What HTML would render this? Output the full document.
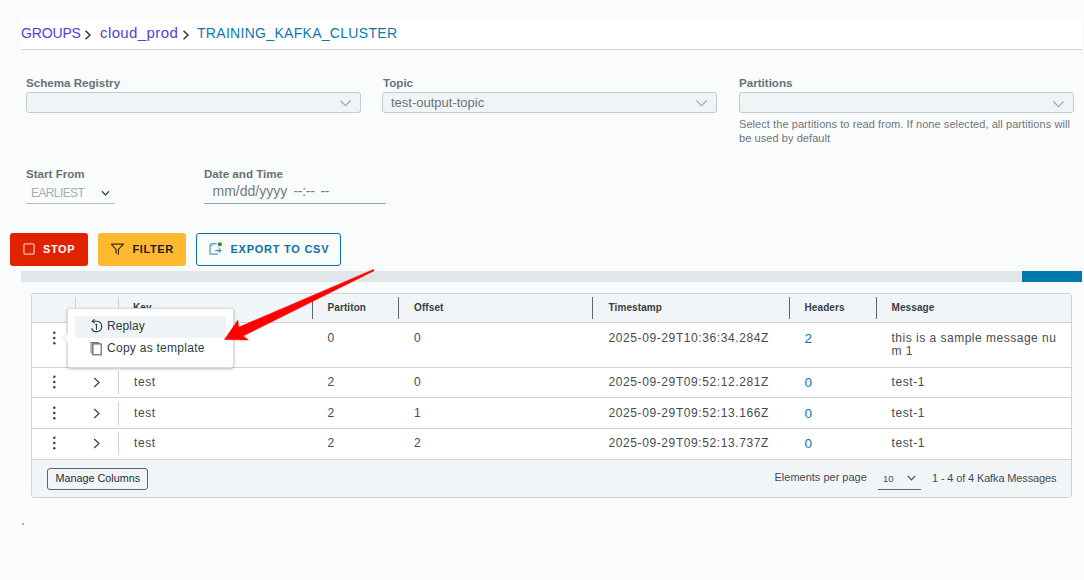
<!DOCTYPE html>
<html><head><meta charset="utf-8">
<style>
*{box-sizing:border-box;margin:0;padding:0}
html,body{width:1084px;height:580px;overflow:hidden;background:#fafbfb;font-family:"Liberation Sans",sans-serif;position:relative}
.a{position:absolute;white-space:nowrap;line-height:1}
.hdr{position:absolute;left:21px;top:18px;width:1061px;height:32px;background:#fff;border-bottom:1px solid #d0d7dc}
.bc{font-size:14px;top:26px}
.lbl{font-size:11.6px;font-weight:bold;color:#67727a;top:76.7px}
.sel{position:absolute;top:92px;height:21px;width:335px;background:#f1f4f7;border:1px solid #c3ccd2;border-radius:3px}
.chev{position:absolute;width:10px;height:6px}
.btn{position:absolute;top:233px;height:33px;border-radius:3px}
.btxt{font-size:11px;font-weight:bold;letter-spacing:0.6px;top:243.7px}
.tbl{position:absolute;left:31px;top:293px;width:1041px;height:205px;border:1px solid #ccd4d9;border-radius:3px;background:#fff;overflow:hidden}
.th{font-size:10px;font-weight:bold;color:#363f45;top:302.5px;letter-spacing:0.1px}
.td{font-size:12px;color:#454c50;letter-spacing:0.6px}
.vs{position:absolute;width:1px;background:#5d6870}
.rl{position:absolute;left:32px;width:1039px;height:1px;background:#ccd4d9}
</style></head><body>
<div class="hdr"></div>
<div class="a bc" style="left:21px;color:#5042d8;letter-spacing:-0.15px">GROUPS</div>
<div class="a bc" style="left:100px;top:25.3px;font-size:15px;color:#5042d8;letter-spacing:0.4px">cloud_prod</div>
<div class="a bc" style="left:197px;color:#0b79b0;letter-spacing:0.3px">TRAINING_KAFKA_CLUSTER</div>

<div class="a lbl" style="left:26px">Schema Registry</div>
<div class="a lbl" style="left:383px">Topic</div>
<div class="a lbl" style="left:739px">Partitions</div>
<div class="sel" style="left:26px"></div>
<div class="sel" style="left:382px"></div>
<div class="sel" style="left:739px"></div>

<svg class="a" style="left:83.5px;top:30px" width="8" height="10" viewBox="0 0 8 10"><path d="M1.5 0.8 L6 5 L1.5 9.2" fill="none" stroke="#2f3336" stroke-width="1.45"/></svg>
<svg class="a" style="left:181.5px;top:30px" width="8" height="10" viewBox="0 0 8 10"><path d="M1.5 0.8 L6 5 L1.5 9.2" fill="none" stroke="#2f3336" stroke-width="1.45"/></svg>
<div class="a" style="left:391px;top:95.5px;font-size:13px;color:#6b7378">test-output-topic</div>
<svg class="a" style="left:340px;top:100px" width="11" height="7" viewBox="0 0 11 7"><path d="M0.5 0.5 L5.5 5.8 L10.5 0.5" fill="none" stroke="#98a2aa" stroke-width="1.1"/></svg>
<svg class="a" style="left:696px;top:100px" width="11" height="7" viewBox="0 0 11 7"><path d="M0.5 0.5 L5.5 5.8 L10.5 0.5" fill="none" stroke="#98a2aa" stroke-width="1.1"/></svg>
<svg class="a" style="left:1053px;top:101px" width="11" height="7" viewBox="0 0 11 7"><path d="M0.5 0.5 L5.5 5.8 L10.5 0.5" fill="none" stroke="#98a2aa" stroke-width="1.1"/></svg>
<div class="a" style="left:739px;top:117px;font-size:11px;line-height:14px;color:#6e767b;white-space:normal;width:350px;letter-spacing:0.07px">Select the partitions to read from. If none selected, all partitions will<br>be used by default</div>

<div class="a lbl" style="left:26px;top:168px">Start From</div>
<div class="a lbl" style="left:204px;top:168px">Date and Time</div>
<div class="a" style="left:31px;top:186.8px;font-size:12px;letter-spacing:-0.6px;color:#a5aeb4">EARLIEST</div>
<svg class="a" style="left:101px;top:190px" width="9" height="7" viewBox="0 0 9 7"><path d="M1 1.2 L4.5 5 L8 1.2" fill="none" stroke="#3c4a52" stroke-width="1.35"/></svg>
<div class="a" style="left:26px;top:203px;width:89px;height:1px;background:#b7c0c6"></div>
<div class="a" style="left:212.5px;top:184.4px;font-size:14px;color:#737c82">mm/dd/yyyy</div>
<div class="a" style="left:293.5px;top:184.4px;font-size:14px;color:#737c82;letter-spacing:-0.3px">--:--</div>
<div class="a" style="left:320.5px;top:184.4px;font-size:14px;color:#737c82;letter-spacing:-0.4px">--</div>
<div class="a" style="left:204px;top:203px;width:182px;height:1px;background:#9aa5ac"></div>

<div class="btn" style="left:10px;width:78px;background:#e02200"></div>
<svg class="a" style="left:23px;top:243px" width="12" height="12" viewBox="0 0 12 12"><rect x="0.9" y="0.9" width="10.2" height="10.2" rx="1.3" fill="none" stroke="#f6c0b4" stroke-width="1.3"/></svg>
<div class="a btxt" style="left:43px;color:#fff">STOP</div>
<div class="btn" style="left:98px;width:88px;background:#ffb92e"></div>
<svg class="a" style="left:110px;top:243px" width="14" height="13" viewBox="0 0 14 13"><path d="M1.2 1.1 H13.5 L8.4 6.4 V11.8 M1.2 1.1 L6 6.4 V10.6" fill="none" stroke="#3d300c" stroke-width="1.25" stroke-linejoin="round"/></svg>
<div class="a btxt" style="left:132.5px;color:#1d1d1d">FILTER</div>
<div class="btn" style="left:196px;width:145px;border:1px solid #0a72a5;background:transparent"></div>
<svg class="a" style="left:208px;top:241px" width="16" height="15" viewBox="0 0 16 15"><path d="M8.7 2.7 H4.6 Q2.1 2.8 2 5.2 V12.2 Q2 13.2 3 13.2 H9.8" fill="none" stroke="#4a9bc4" stroke-width="1.25"/><path d="M3.6 5.3 L5.6 3.6" fill="none" stroke="#4a9bc4" stroke-width="0.9"/><path d="M7.3 9.6 H12.6 M10.8 7.6 L12.8 9.6 L10.8 11.6" fill="none" stroke="#3f95c2" stroke-width="1.25"/><path d="M9.8 5.6 L11.8 7.6" fill="none" stroke="#9cc8de" stroke-width="0.8"/><circle cx="11.9" cy="3.3" r="2" fill="#2f8a12"/></svg>
<div class="a btxt" style="left:230.5px;color:#0a72a5;letter-spacing:0.75px">EXPORT TO CSV</div>

<div class="a" style="left:21px;top:271px;width:1061px;height:11px;background:#e1e6ea"></div>
<div class="a" style="left:1022px;top:271px;width:60px;height:11px;background:#0079ad"></div>
<div class="tbl"></div>
<div class="a" style="left:32px;top:294px;width:1039px;height:28px;background:#f1f5f8"></div>
<div class="rl" style="top:322px"></div>
<div class="rl" style="top:367px"></div>
<div class="rl" style="top:397px"></div>
<div class="rl" style="top:428px"></div>
<div class="rl" style="top:459px"></div>
<div class="a" style="left:32px;top:460px;width:1039px;height:37px;background:#f1f5f8"></div>
<div class="vs" style="left:75px;top:297px;height:22px;background:#c9d1d6"></div>
<div class="vs" style="left:118px;top:297px;height:22px;background:#c9d1d6"></div>
<div class="vs" style="left:312px;top:297px;height:22px;background:#5d6870"></div>
<div class="vs" style="left:398px;top:297px;height:22px;background:#5d6870"></div>
<div class="vs" style="left:592px;top:297px;height:22px;background:#5d6870"></div>
<div class="vs" style="left:789px;top:297px;height:22px;background:#5d6870"></div>
<div class="vs" style="left:876px;top:297px;height:22px;background:#5d6870"></div>
<div class="a th" style="left:133px">Key</div>
<div class="a th" style="left:327.5px">Partiton</div>
<div class="a th" style="left:414px">Offset</div>
<div class="a th" style="left:608.5px">Timestamp</div>
<div class="a th" style="left:804.5px">Headers</div>
<div class="a th" style="left:891.5px">Message</div>
<svg class="a" style="left:52px;top:331px" width="5" height="14" viewBox="0 0 5 14"><circle cx="2.3" cy="1.8" r="1.3" fill="#3d474d"/><circle cx="2.3" cy="7" r="1.3" fill="#3d474d"/><circle cx="2.3" cy="12.2" r="1.3" fill="#3d474d"/></svg>
<div class="a td" style="left:327.5px;top:331.842px">0</div>
<div class="a td" style="left:414px;top:331.842px">0</div>
<div class="a td" style="left:608.5px;top:331.842px">2025-09-29T10:36:34.284Z</div>
<div class="a td" style="left:804.5px;top:331.64px;color:#0a75ae;font-size:13.5px;letter-spacing:0">2</div>
<div class="a td" style="left:891.5px;top:331.5px;line-height:13.5px;letter-spacing:0.5px">this is a sample message nu<br>m 1</div>
<svg class="a" style="left:52px;top:375.3px" width="5" height="14" viewBox="0 0 5 14"><circle cx="2.3" cy="1.8" r="1.3" fill="#3d474d"/><circle cx="2.3" cy="7" r="1.3" fill="#3d474d"/><circle cx="2.3" cy="12.2" r="1.3" fill="#3d474d"/></svg>
<svg class="a" style="left:93px;top:376.8px" width="8" height="11" viewBox="0 0 8 11"><path d="M1.2 1 L6 5.5 L1.2 10" fill="none" stroke="#3d474d" stroke-width="1.3"/></svg>
<div class="vs" style="left:118px;top:370.8px;height:23px;background:#c9d1d6"></div>
<div class="a td" style="left:134px;top:375.842px">test</div>
<div class="a td" style="left:327.5px;top:375.842px">2</div>
<div class="a td" style="left:414px;top:375.842px">0</div>
<div class="a td" style="left:608.5px;top:375.842px">2025-09-29T09:52:12.281Z</div>
<div class="a td" style="left:804.5px;top:375.64px;color:#0a75ae;font-size:13.5px;letter-spacing:0">0</div>
<div class="a td" style="left:891.5px;top:375.842px">test-1</div>
<svg class="a" style="left:52px;top:406px" width="5" height="14" viewBox="0 0 5 14"><circle cx="2.3" cy="1.8" r="1.3" fill="#3d474d"/><circle cx="2.3" cy="7" r="1.3" fill="#3d474d"/><circle cx="2.3" cy="12.2" r="1.3" fill="#3d474d"/></svg>
<svg class="a" style="left:93px;top:407.5px" width="8" height="11" viewBox="0 0 8 11"><path d="M1.2 1 L6 5.5 L1.2 10" fill="none" stroke="#3d474d" stroke-width="1.3"/></svg>
<div class="vs" style="left:118px;top:401.5px;height:23px;background:#c9d1d6"></div>
<div class="a td" style="left:134px;top:406.842px">test</div>
<div class="a td" style="left:327.5px;top:406.842px">2</div>
<div class="a td" style="left:414px;top:406.842px">1</div>
<div class="a td" style="left:608.5px;top:406.842px">2025-09-29T09:52:13.166Z</div>
<div class="a td" style="left:804.5px;top:406.64px;color:#0a75ae;font-size:13.5px;letter-spacing:0">0</div>
<div class="a td" style="left:891.5px;top:406.842px">test-1</div>
<svg class="a" style="left:52px;top:436.3px" width="5" height="14" viewBox="0 0 5 14"><circle cx="2.3" cy="1.8" r="1.3" fill="#3d474d"/><circle cx="2.3" cy="7" r="1.3" fill="#3d474d"/><circle cx="2.3" cy="12.2" r="1.3" fill="#3d474d"/></svg>
<svg class="a" style="left:93px;top:437.8px" width="8" height="11" viewBox="0 0 8 11"><path d="M1.2 1 L6 5.5 L1.2 10" fill="none" stroke="#3d474d" stroke-width="1.3"/></svg>
<div class="vs" style="left:118px;top:431.8px;height:23px;background:#c9d1d6"></div>
<div class="a td" style="left:134px;top:436.842px">test</div>
<div class="a td" style="left:327.5px;top:436.842px">2</div>
<div class="a td" style="left:414px;top:436.842px">2</div>
<div class="a td" style="left:608.5px;top:436.842px">2025-09-29T09:52:13.737Z</div>
<div class="a td" style="left:804.5px;top:436.64px;color:#0a75ae;font-size:13.5px;letter-spacing:0">0</div>
<div class="a td" style="left:891.5px;top:436.842px">test-1</div>
<div class="a" style="left:47px;top:468px;width:101px;height:22px;border:1px solid #5a6770;border-radius:3px"></div>
<div class="a" style="left:55.5px;top:472.8px;font-size:10.8px;color:#1f2d38">Manage Columns</div>
<div class="a" style="left:774.5px;top:471.5px;font-size:11px;color:#454c50">Elements per page</div>
<div class="a" style="left:883px;top:474px;font-size:9.5px;color:#454c50">10</div>
<svg class="a" style="left:907px;top:475px" width="9" height="6" viewBox="0 0 9 6"><path d="M0.8 0.8 L4.5 4.8 L8.2 0.8" fill="none" stroke="#454c50" stroke-width="1.2"/></svg>
<div class="a" style="left:878px;top:489px;width:43px;height:1px;background:#5a6770"></div>
<div class="a" style="left:932px;top:472.5px;font-size:11px;letter-spacing:-0.14px;color:#454c50">1 - 4 of 4 Kafka Messages</div>

<div class="a" style="left:67px;top:308px;width:166.5px;height:59.5px;background:#fff;border:1px solid #d5dbdf;border-radius:3px;box-shadow:0 1px 3px rgba(0,0,0,0.28)"></div>
<svg class="a" style="left:62px;top:330px" width="8" height="16" viewBox="0 0 8 16"><path d="M5.8 3.6 L1.1 7.9 L5.8 12.2" fill="#fff" stroke="#d9dfe2" stroke-width="0.9"/><rect x="5.6" y="2.5" width="2.8" height="11" fill="#fff"/></svg>
<div class="a" style="left:75px;top:316px;width:151px;height:22px;background:#eef3f6"></div>
<svg class="a" style="left:90px;top:319px" width="13" height="14" viewBox="0 0 13 14"><path d="M6.5 2.2 A5.2 5.2 0 1 1 1.6 9.2" fill="none" stroke="#2f3b42" stroke-width="1.1"/><path d="M6.6 2.2 H2.4" fill="none" stroke="#2f3b42" stroke-width="1.1"/><path d="M4.6 0.3 L2.3 2.2 L4.6 4.1" fill="none" stroke="#2f3b42" stroke-width="1.1"/><path d="M5.3 5.9 L6.5 5.3 V10.8" fill="none" stroke="#2f3b42" stroke-width="1.1"/></svg>
<div class="a" style="left:107px;top:320px;font-size:12px;color:#2f3b42;letter-spacing:0.1px">Replay</div>
<svg class="a" style="left:89px;top:341px" width="14" height="15" viewBox="0 0 14 15"><path d="M1.3 1.4 V11.6 L3.9 13.8 V2.9 H10 V1.4 Z" fill="#a3acb1"/><path d="M1.3 1.5 H10" fill="none" stroke="#6f7a80" stroke-width="1"/><rect x="3.9" y="2.9" width="8.3" height="10.9" fill="#fff" stroke="#5f6a70" stroke-width="1.2"/></svg>
<div class="a" style="left:107px;top:341.5px;font-size:12px;color:#2f3b42;letter-spacing:0.27px">Copy as template</div>
<svg class="a" style="left:0;top:0" width="1084" height="580" viewBox="0 0 1084 580"><path d="M373.6 269.4 L374 270.8 L243.2 335.9 L248.3 339.9 L224.5 339.6 L237.8 320.3 L238.7 327.2 Z" fill="#ff0000" stroke="#ff0000" stroke-width="0.6" stroke-linejoin="round"/></svg>
<div class="a" style="left:22px;top:523px;width:2px;height:2px;background:#8a9ab0;border-radius:1px"></div>
</body></html>
